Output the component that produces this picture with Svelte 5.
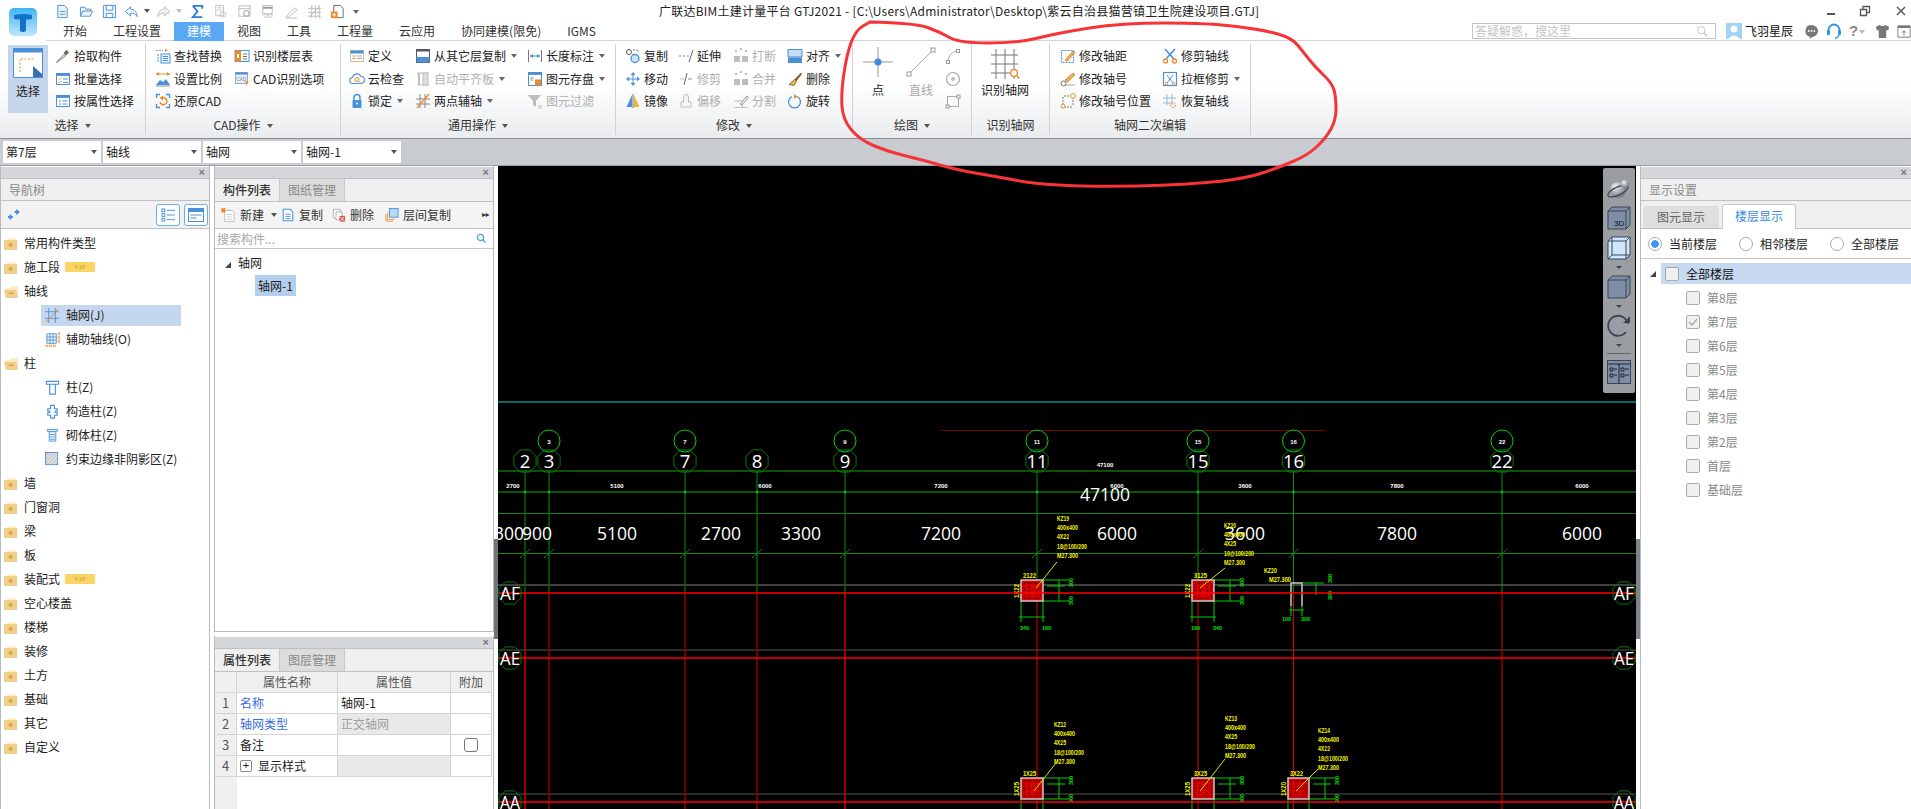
<script>
	const B = '#4a90d9';
	const O = '#ee8a2a';
	const G = '#bdbdbd';
	const D = '#8a8a8a';

	const icons = {
		file: `<path d="M3 1.5h7l3 3v10H3z" fill="#eef5fc" stroke="${B}"/><path d="M5 8h6M5 11h6" stroke="${B}"/>`,
		folder: `<path d="M1.5 13V3.5h5l1 2h5v2" fill="#eef5fc" stroke="${B}"/><path d="M1.5 13l2.5-5.5h10.5L12 13z" fill="#eef5fc" stroke="${B}"/>`,
		disk: `<path d="M1.5 1.5h13v13h-13z" fill="#eef5fc" stroke="${B}"/><path d="M4.5 1.5h7v5h-7zM4.5 10h7v4.5h-7z" fill="#fff" stroke="${B}"/>`,
		undo: `<path d="M7 2L1.5 7 7 12V9c3-.5 5.5.5 7 3.5 0-5-3-8-7-8z" fill="#eef5fc" stroke="${B}" transform="translate(0 1)"/>`,
		redo: `<path d="M9 2l5.500 5L9 12V9c-3-.5-5.500.5-7 3.500 0-5 3-8 7-8z" fill="#f4f4f4" stroke="${G}" transform="translate(0 1)"/>`,
		sigma: `<path d="M3 2h10v3M13 14H3l5-6-5-6" fill="none" stroke="#2f7fd0" stroke-width="2"/>`,
		q1: `<path d="M3 1.500h8v11H3zM5 4h4M5 6.500h4" fill="none" stroke="${G}"/><circle cx="10.500" cy="11" r="3" fill="none" stroke="${G}"/>`,
		q2: `<rect x="2" y="2" width="12" height="11" fill="none" stroke="${G}"/><path d="M2 5h12" stroke="${G}"/><circle cx="10" cy="10" r="3" fill="#fff" stroke="${D}"/>`,
		q3: `<rect x="3" y="1.500" width="10" height="9" fill="none" stroke="${G}"/><path d="M3 4h10" stroke="#999" stroke-width="2"/><circle cx="6" cy="12.500" r="2" fill="none" stroke="${G}"/><circle cx="11" cy="12.500" r="2" fill="none" stroke="${G}"/>`,
		q4: `<path d="M2 14l9-10 3 2-9 8zM2 15h12" fill="none" stroke="${G}"/>`,
		q5: `<path d="M5 1v14M9 1v14M13 1v14M1 5h14M1 9h14M1 13h14M2 14L14 2" stroke="${G}"/>`,
		q6: `<path d="M4 1.500h7l3 3v10H4z" fill="#fff" stroke="#666"/><path d="M1 8h7v7H1z" fill="${O}"/><path d="M4.500 9.500v4M2.500 11.500h4" stroke="#fff"/>`,
		pick: `<path d="M2.500 14l-1 .5.5-1L9 6.500l1.500 1.500z" fill="#ddd" stroke="#888"/><path d="M8.500 5l3-3 2.500 2.500-3 3z" fill="#666"/>`,
		batch: `<rect x="1.500" y="2.500" width="13" height="11" fill="#fff" stroke="${B}"/><path d="M1.500 3.700h13" stroke="${B}" stroke-width="2.400"/><path d="M3.500 7.500l1 1 2-2M3.500 11l1 1 2-2" stroke="${O}" fill="none"/><path d="M8 8h5M8 11.500h5" stroke="${B}"/>`,
		attr: `<rect x="1.500" y="2.500" width="13" height="11" fill="#fff" stroke="${B}"/><path d="M1.500 3.700h13" stroke="${B}" stroke-width="2.400"/><path d="M4 8h2M4 11h2M7.500 8h5M7.500 11h5" stroke="${B}"/>`,
		find: `<path d="M1 2.500h7" stroke="#999" stroke-dasharray="2 1"/><path d="M10 1v3l3-1.500z" fill="${O}"/><rect x="6" y="6" width="9" height="9" fill="#eef5fc" stroke="${B}"/><path d="M8 8.500h5M8 10.500h5M8 12.500h5M2 7h2M2 10h2M2 13h2" stroke="${B}"/>`,
		scale: `<path d="M1 3h14" stroke="${O}"/><path d="M1 3l3-2v4zM15 3l-3-2v4z" fill="${O}"/><path d="M1 14l4-5 3 2 3-3 4 6z" fill="${B}"/><path d="M1 15h14" stroke="#888"/>`,
		restore: `<path d="M1.500 5V1.500H5M11 1.500h3.500V5M14.500 11v3.500H11M5 14.500H1.500V11" fill="none" stroke="${B}" stroke-width="1.300"/><path d="M5 9a3.500 3.500 0 1 0 2-4" fill="none" stroke="${O}" stroke-width="1.500"/><path d="M8 2.500v5L4.500 5z" fill="${O}"/>`,
		floor: `<rect x="1" y="2.500" width="14" height="11" fill="#fff" stroke="${B}"/><path d="M1 2.500h6v11H1z" fill="${O}"/><path d="M3 6h2v4H3z" fill="#fff"/><path d="M9 6h4M9 8.500h4M9 11h4" stroke="#777"/>`,
		cadopt: `<rect x="1.500" y="1.500" width="12" height="11" fill="#e8eef7" stroke="#9ab"/><path d="M1.500 2.500h12" stroke="${B}" stroke-width="2"/><text x="2.500" y="9.500" font-size="4.500" fill="#7a8fb0" font-family="Liberation Sans">CAD</text><path d="M11 9l4 3-2 .5-.5 2.500z" fill="${O}"/>`,
		define: `<rect x="1.500" y="2.500" width="13" height="11" fill="#fdfdfd" stroke="#c9bfa5"/><path d="M1.500 2.500h13v3h-13z" fill="${B}"/><path d="M3.500 8h3M3.500 10.500h3" stroke="${O}"/><path d="M8 8h5M8 10.500h5" stroke="#aaa"/>`,
		cloud: `<path d="M4 12.500a3 3 0 0 1-.5-6 4.500 4.500 0 0 1 8.500-1 3.500 3.500 0 0 1 0 7z" fill="#fff" stroke="${B}" stroke-width="1.100"/><circle cx="8" cy="8.500" r="2" fill="none" stroke="${O}"/><path d="M9.500 10l1.500 1.500" stroke="${O}"/>`,
		lock: `<path d="M5 7V4.500a3 3 0 0 1 6 0V7" fill="none" stroke="${B}" stroke-width="1.500"/><rect x="3.500" y="7" width="9" height="8" rx="1" fill="${B}"/><circle cx="8" cy="10.500" r="1" fill="#fff"/>`,
		copyfloor: `<rect x="1.500" y="1.500" width="13" height="13" fill="#fff" stroke="#556"/><path d="M1.500 2.500h13" stroke="#556" stroke-width="2"/><path d="M1.500 9h13v5.500h-13z" fill="${B}"/>`,
		autofit: `<path d="M2 2h12M2 14h12" stroke="${G}"/><rect x="3" y="2" width="2" height="12" fill="${G}"/><rect x="8" y="2" width="5" height="12" fill="#ddd" stroke="${G}"/>`,
		twopt: `<path d="M5 1v14M10 1v14M1 6h14M1 11h14" stroke="#888"/><path d="M2 15L14 1" stroke="${O}" stroke-width="1.300"/>`,
		length: `<path d="M1.500 2v12M14.500 2v12" stroke="#777"/><path d="M3 8h10" stroke="${B}"/><path d="M3 8l3-2v4zM13 8l-3-2v4z" fill="${B}"/>`,
		store: `<rect x="1.500" y="1.500" width="13" height="13" fill="#fff" stroke="${B}"/><path d="M1.500 2.700h13" stroke="${B}" stroke-width="2.400"/><path d="M3.500 7h3M3.500 9h2" stroke="#778"/><rect x="8" y="8.500" width="6" height="6" fill="${O}"/>`,
		filter: `<path d="M1 2h13L9 8v6l-3-2V8z" fill="${G}"/><path d="M11 13h4M11 15h4" stroke="${G}"/>`,
		copy: `<circle cx="4" cy="4" r="2.500" fill="none" stroke="#555"/><path d="M8 2h4l2 2" fill="none" stroke="#777" stroke-dasharray="2 1"/><circle cx="10" cy="10.500" r="4" fill="#cfe4f8" stroke="${B}" stroke-width="1.300"/>`,
		move: `<path d="M8 1l2.500 3h-5zM8 15l2.500-3h-5zM1 8l3-2.500v5zM15 8l-3-2.500v5z" fill="${B}"/><path d="M8 4v8M4 8h8" stroke="${B}"/>`,
		mirror: `<path d="M7 2v12H1.500z" fill="${B}"/><path d="M9 2v12h5.500z" fill="#f3b431"/><path d="M8 1v14" stroke="#777"/>`,
		extend: `<path d="M1 8h7" stroke="#777" stroke-dasharray="2 1.500"/><path d="M9 8h2" stroke="${B}"/><path d="M11 14l4-12" stroke="#667"/>`,
		trim: `<path d="M2 8h4M10 8h4" stroke="${G}"/><path d="M6 14l3-12" stroke="#666"/><path d="M10 8h4" stroke="#999" stroke-dasharray="2 1"/>`,
		offset: `<path d="M3 14V9h2.500V4a2 2 0 0 1 5 0v5H13v5z" fill="#f7f7f7" stroke="${G}"/>`,
		breakl: `<path d="M2 3h2M12 3h2M7 1h2" stroke="${G}" stroke-width="2"/><rect x="1" y="8" width="6" height="6" fill="${G}"/><rect x="9" y="8" width="6" height="6" fill="${G}"/>`,
		split: `<path d="M1.500 14.500h13M1.500 8h8v6.500" fill="none" stroke="${G}"/><path d="M7 11l7-8 1.500 1.500L9 12z" fill="#eee" stroke="#999"/>`,
		align: `<path d="M1 1.500h14V9H1z" fill="#c8dcf4" stroke="${B}"/><path d="M1 9.500h14v5.500H1z" fill="${B}"/>`,
		erase: `<path d="M14 1.500L7.500 8.500l2 1.500L15 3z" fill="#8a5a2a"/><path d="M7.500 8.500L2 13.500l5 1 2.500-4.500z" fill="#f3b431" stroke="#333" stroke-width=".6"/>`,
		rotate: `<path d="M5 3.500a6 6 0 1 0 5 0" fill="none" stroke="${B}" stroke-width="1.300"/><path d="M7 1l3.500 2.500L7 6z" fill="${O}"/>`,
		arc: `<path d="M3 14C3 8 7 3 13 3" fill="none" stroke="#aaa"/><rect x="1.500" y="12.500" width="3" height="3" fill="#fff" stroke="#999"/><rect x="11.500" y="1.500" width="3" height="3" fill="#fff" stroke="#999"/>`,
		circle: `<circle cx="8" cy="8" r="6.500" fill="#fff" stroke="#aaa" stroke-width="1.200"/><circle cx="8" cy="8" r="1.300" fill="none" stroke="#999"/>`,
		rect: `<rect x="2.500" y="3.500" width="11" height="10" fill="none" stroke="#aaa"/><rect x="1" y="12" width="3" height="3" fill="#fff" stroke="#999"/><rect x="12" y="2" width="3" height="3" fill="#fff" stroke="#999"/>`,
		editdist: `<rect x="1.500" y="2.500" width="12" height="12" fill="none" stroke="${B}" stroke-dasharray="2 1"/><path d="M5 12l8-9 2 1.500-8 9z" fill="#f3b431" stroke="#a66"  stroke-width=".6"/>`,
		editnum: `<circle cx="3.500" cy="12.500" r="2.500" fill="#fff" stroke="#777"/><path d="M5 9l8-7 2 2-8 7.500z" fill="#f3b431" stroke="#a66" stroke-width=".6"/><path d="M6 14h9" stroke="#aaa"/>`,
		editpos: `<path d="M3 4v9M13 4v9M4 3h8M4 14h8" stroke="#777" stroke-dasharray="2 1"/><circle cx="3" cy="13" r="2" fill="#fff" stroke="${O}"/><circle cx="13" cy="3" r="2.400" fill="#fff" stroke="${O}"/>`,
		scissor: `<path d="M3 1l9 10M13 1L4 11" stroke="${B}" stroke-width="1.600"/><circle cx="3.500" cy="13" r="2" fill="none" stroke="${O}" stroke-width="1.300"/><circle cx="12.500" cy="13" r="2" fill="none" stroke="${O}" stroke-width="1.300"/>`,
		boxtrim: `<rect x="1.500" y="1.500" width="13" height="13" fill="#fff" stroke="${B}" stroke-width="1.200"/><path d="M5 4l6 8M11 4l-6 8" stroke="${B}"/><circle cx="4.500" cy="12.500" r="1.300" fill="none" stroke="${O}"/><circle cx="11.500" cy="12.500" r="1.300" fill="none" stroke="${O}"/>`,
		recover: `<path d="M5 1v11M10 1v11M1 5h13M1 10h8" stroke="#9bb7d8"/><circle cx="11" cy="12" r="2.500" fill="none" stroke="${O}" stroke-dasharray="2 1"/>`,
		fclosed: `<path d="M0 4h5V2h7v2h2v11H0z" fill="#f0cf8e"/><path d="M5 2h7v2H5z" fill="#fff4d8"/><path d="M7 7v5M4.500 9.500h5" stroke="#d29d3f" stroke-width="1.500"/>`,
		fopen: `<path d="M1 4h6V2h8v11H3z" fill="#fbecc8"/><path d="M0 6h13l2 9H2z" fill="#f0cf8e"/><path d="M5 10h5" stroke="#d29d3f" stroke-width="1.500"/>`,
		ngrid: `<path d="M4 0v16M11 0v16M0 4h15M0 11h15" stroke="${B}"/><path d="M1 15L14 1" stroke="${O}"/>`,
		naux: `<path d="M2 2h10v10H2zM5.300 2v10M8.600 2v10M2 5.300h10M2 8.600h10" fill="none" stroke="${B}"/><path d="M14 1h2v2h-2zM14 5h2v2h-2zM14 9h2v2h-2zM1 14h2v2H1zM5 14h2v2H5zM9 14h2v2H9z" fill="none" stroke="${O}" stroke-width=".8"/>`,
		ncol: `<path d="M1.500 1.500h13v3h-13zM5 4.500h6V15H5z" fill="#fff" stroke="${B}" stroke-width="1.200"/>`,
		ncross: `<path d="M6 1.500h4V5h3v2.500h-2v1.500h2v3h-3v3H6v-3H3V9h2V7.500H3V5h3z" fill="#fff" stroke="${B}" stroke-width="1.200"/>`,
		nmason: `<path d="M2.500 1.500h11v2h-11zM4.500 4h7v10h-7z" fill="#fff" stroke="${B}"/><path d="M5 7h6M5 9.500h6M5 12h6" stroke="${B}"/>`,
		nhatch: `<rect x=".5" y=".5" width="13" height="13" fill="#ccc" stroke="${B}"/><path d="M1 5l4-4M1 9l8-8M1 13L13 1M5 13l8-8M9 13l4-4" stroke="#eee"/>`,
		sparkle: `<path d="M3 8v6M0 11h6M11 2v6M8 5h6" stroke="${B}" stroke-width="2.400"/>`,
		list: `<rect x="1" y="2" width="3" height="3" fill="none" stroke="${B}"/><rect x="1" y="7" width="3" height="3" fill="none" stroke="${B}"/><rect x="1" y="12" width="3" height="3" fill="none" stroke="${B}"/><path d="M6 3.500h9M6 8.500h9M6 13.500h9" stroke="${B}"/>`,
		panel: `<rect x=".5" y="1.500" width="15" height="13" fill="#fff" stroke="${B}"/><path d="M.5 1.500h15v3.500H.5z" fill="${B}"/><path d="M2.500 8h11M2.500 11h6" stroke="${B}"/>`,
		tnew: `<path d="M4 2.500h8l2 2v10H4z" fill="#fff" stroke="#bbb"/><path d="M6 7h6M6 9.500h6M6 12h6" stroke="#ccc"/><path d="M0 0h5v5H0z" fill="${O}" stroke="#fff" stroke-dasharray="1 1"/>`,
		tcopy: `<path d="M2.500 1.500h8l3 3v10h-11z" fill="#fff" stroke="${B}" stroke-width="1.200"/><path d="M5 7h6M5 9.500h6M5 12h6" stroke="${B}"/>`,
		tdel: `<path d="M1.500 1.500h8v10h-8z" fill="#fff" stroke="#aaa"/><path d="M4.500 4.500h7v9h-7z" fill="#fff" stroke="#aaa"/><rect x="8.500" y="9" width="6.500" height="6.500" fill="#e0504a"/><path d="M9.500 10l4.500 4.500M14 10l-4.500 4.500" stroke="#fff"/>`,
		tlayer: `<rect x="5" y="0.500" width="10" height="10" fill="#b8d8f8" stroke="${B}"/><path d="M3 5v8h8M1 7v8h8" fill="none" stroke="${O}"/>`,
		search: `<circle cx="6.500" cy="6.500" r="4.500" fill="#fff" stroke="#4aa3d8" stroke-width="1.800"/><path d="M10 10l4 4" stroke="#4aa3d8" stroke-width="2"/>`,
		searchg: `<circle cx="6.500" cy="6.500" r="4.500" fill="none" stroke="#bbb"/><path d="M10 10l4 4" stroke="#bbb" stroke-width="1.500"/>`
	};

	function svg(name, size = 16) {
		return `<svg width="${size}" height="${size}" viewBox="0 0 16 16">${icons[name]}</svg>`;
	}

	const quick = [
		['file', ''], ['folder', ''], ['disk', ''], ['undo', 'u'], ['', 'c'], ['redo', 'u'], ['', 'cg'],
		['sigma', 's'], ['q1', ''], ['q2', ''], ['q3', ''], ['q4', ''], ['q5', ''], ['q6', ''], ['', 'm']
	];

	const tabs = ['开始', '工程设置', '建模', '视图', '工具', '工程量', '云应用', '协同建模(限免)', 'IGMS'];

	const groups = [
		{
			name: '选择', cls: 'g1', caret: true,
			parts: [
				{ big: 'select', text: '选择', cls: 'sel' },
				{ w: 'w0', items: [
					{ icon: 'pick', text: '拾取构件' },
					{ icon: 'batch', text: '批量选择' },
					{ icon: 'attr', text: '按属性选择' }
				] }
			]
		},
		{
			name: 'CAD操作', cls: 'g2', caret: true,
			parts: [
				{ w: 'w79', items: [
					{ icon: 'find', text: '查找替换' },
					{ icon: 'scale', text: '设置比例' },
					{ icon: 'restore', text: '还原CAD' }
				] },
				{ w: 'w0', items: [
					{ icon: 'floor', text: '识别楼层表' },
					{ icon: 'cadopt', text: 'CAD识别选项' }
				] }
			]
		},
		{
			name: '通用操作', cls: 'g3', caret: true,
			parts: [
				{ w: 'w66', items: [
					{ icon: 'define', text: '定义' },
					{ icon: 'cloud', text: '云检查' },
					{ icon: 'lock', text: '锁定', caret: true }
				] },
				{ w: 'w112', items: [
					{ icon: 'copyfloor', text: '从其它层复制', caret: true },
					{ icon: 'autofit', text: '自动平齐板', caret: true, off: true },
					{ icon: 'twopt', text: '两点辅轴', caret: true }
				] },
				{ w: 'w0', items: [
					{ icon: 'length', text: '长度标注', caret: true },
					{ icon: 'store', text: '图元存盘', caret: true },
					{ icon: 'filter', text: '图元过滤', off: true }
				] }
			]
		},
		{
			name: '修改', cls: 'g4', caret: true,
			parts: [
				{ w: 'w53', items: [
					{ icon: 'copy', text: '复制' },
					{ icon: 'move', text: '移动' },
					{ icon: 'mirror', text: '镜像' }
				] },
				{ w: 'w55', items: [
					{ icon: 'extend', text: '延伸' },
					{ icon: 'trim', text: '修剪', off: true },
					{ icon: 'offset', text: '偏移', off: true }
				] },
				{ w: 'w54', items: [
					{ icon: 'breakl', text: '打断', off: true },
					{ icon: 'breakl', text: '合并', off: true },
					{ icon: 'split', text: '分割', off: true }
				] },
				{ w: 'w0', items: [
					{ icon: 'align', text: '对齐', caret: true },
					{ icon: 'erase', text: '删除' },
					{ icon: 'rotate', text: '旋转' }
				] }
			]
		},
		{
			name: '绘图', cls: 'g5', caret: true,
			parts: [
				{ big: 'point', text: '点', cls: 'b50' },
				{ big: 'line', text: '直线', cls: 'b34 off' },
				{ w: 'w0', items: [
					{ icon: 'arc', text: '' },
					{ icon: 'circle', text: '' },
					{ icon: 'rect', text: '' }
				] }
			]
		},
		{
			name: '识别轴网', cls: 'g6',
			parts: [{ big: 'grid', text: '识别轴网', cls: 'b50' }]
		},
		{
			name: '轴网二次编辑', cls: 'g7',
			parts: [
				{ w: 'w102', items: [
					{ icon: 'editdist', text: '修改轴距' },
					{ icon: 'editnum', text: '修改轴号' },
					{ icon: 'editpos', text: '修改轴号位置' }
				] },
				{ w: 'w0', items: [
					{ icon: 'scissor', text: '修剪轴线' },
					{ icon: 'boxtrim', text: '拉框修剪', caret: true },
					{ icon: 'recover', text: '恢复轴线' }
				] }
			]
		}
	];

	const selectors = ['第7层', '轴线', '轴网', '轴网-1'];

	const tree = [
		{ t: '常用构件类型', icon: 'fclosed' },
		{ t: '施工段', icon: 'fclosed', vip: true },
		{ t: '轴线', icon: 'fopen' },
		{ t: '轴网(J)', icon: 'ngrid', child: true, sel: true },
		{ t: '辅助轴线(O)', icon: 'naux', child: true },
		{ t: '柱', icon: 'fopen' },
		{ t: '柱(Z)', icon: 'ncol', child: true },
		{ t: '构造柱(Z)', icon: 'ncross', child: true },
		{ t: '砌体柱(Z)', icon: 'nmason', child: true },
		{ t: '约束边缘非阴影区(Z)', icon: 'nhatch', child: true },
		{ t: '墙', icon: 'fclosed' },
		{ t: '门窗洞', icon: 'fclosed' },
		{ t: '梁', icon: 'fclosed' },
		{ t: '板', icon: 'fclosed' },
		{ t: '装配式', icon: 'fclosed', vip: true },
		{ t: '空心楼盖', icon: 'fclosed' },
		{ t: '楼梯', icon: 'fclosed' },
		{ t: '装修', icon: 'fclosed' },
		{ t: '土方', icon: 'fclosed' },
		{ t: '基础', icon: 'fclosed' },
		{ t: '其它', icon: 'fclosed' },
		{ t: '自定义', icon: 'fclosed' }
	];

	const floors = ['第8层', '第7层', '第6层', '第5层', '第4层', '第3层', '第2层', '首层', '基础层'];

	// drawing data, in page coordinates
	const axes = [
		{ n: '2', x: 525, hex: true, red: '#d00000' },
		{ n: '3', x: 549, top: true, red: '#8f0000' },
		{ n: '7', x: 685, top: true, red: '#8f0000' },
		{ n: '8', x: 757, red: '#8f0000' },
		{ n: '9', x: 845, top: true, red: '#d00000' },
		{ n: '11', x: 1037, top: true, red: '#e00000', bright: true },
		{ n: '15', x: 1198, top: true, red: '#e00000', bright: true },
		{ n: '16', x: 1293.5, top: true, red: '#e00000', bright: true },
		{ n: '22', x: 1502, top: true, red: '#e00000', bright: true }
	];
	const dims = [
		[513, '2700'], [617, '5100'], [765, '6000'], [941, '7200'],
		[1117, '6000'], [1245, '3600'], [1397, '7800'], [1582, '6000']
	];
	const spans = [
		[509, '300'], [537, '900'], [617, '5100'], [721, '2700'], [801, '3300'], [941, '7200'],
		[1117, '6000'], [1245, '3600'], [1397, '7800'], [1582, '6000']
	];
	const rows = [
		{ n: 'AF', gray: 584, red: 592, c: '#808080' },
		{ n: 'AE', gray: 649, red: 657, c: '#555' },
		{ n: 'AA', gray: 793, red: 801, c: '#555' }
	];
	const columns = [
		{ x: 1021, y: 579, w: 22, h: 21, tx: 1057, ty: 517, lead: [1036, 587, 1057, 561], top: '2122', side: '1X22', low: ['340', '160'],
			lines: ['KZ19', '400x400', '4X22', '18@100/200', 'M27.300'] },
		{ x: 1192, y: 579, w: 22, h: 21, tx: 1224, ty: 524, lead: [1200, 587, 1225, 567], top: '3125', side: '1X22', low: ['160', '340'],
			lines: ['KZ20', '400x400', '4X25', '10@100/200', 'M27.300'] },
		{ x: 1021, y: 777, w: 22, h: 21, tx: 1054, ty: 723, lead: [1034, 790, 1056, 762], top: '1X25', side: '1X25',
			lines: ['KZ12', '400x400', '4X25', '18@100/200', 'M27.300'] },
		{ x: 1192, y: 777, w: 22, h: 21, tx: 1225, ty: 717, lead: [1200, 790, 1225, 758], top: '3X25', side: '1X25',
			lines: ['KZ13', '400x400', '4X25', '18@100/200', 'M27.300'] },
		{ x: 1288, y: 777, w: 21, h: 21, tx: 1318, ty: 729, lead: [1296, 790, 1318, 768], top: '3X22', side: '1X20',
			lines: ['KZ14', '400x400', '4X22', '18@100/200', 'M27.300'] }
	];

	function ngon(cx, cy, r) {
		let pts = [];
		for (let i = 0; i < 8; i++) {
			const a = Math.PI / 8 + (i * Math.PI) / 4;
			pts.push((cx + r * Math.cos(a)).toFixed(1) + ',' + (cy + r * Math.sin(a)).toFixed(1));
		}
		return pts.join(' ');
	}

	// the hand drawn loop round the ribbon
	const loop = [
		[870, 22], [915, 23], [940, 32], [959, 43], [1018, 43], [1058, 33], [1121, 23], [1209, 23], [1264, 30],
		[1292, 38], [1304, 53], [1316, 68], [1332, 83], [1336, 97], [1336, 120], [1326, 138], [1308, 155],
		[1280, 167], [1251, 177], [1209, 183], [1125, 187], [1041, 185], [999, 177], [957, 170], [923, 160],
		[889, 152], [860, 140], [843, 120], [841, 93], [847, 53], [856, 30], [870, 22]
	];
	let loopPath = `M${loop[0][0]} ${loop[0][1]}`;
	for (let i = 1; i < loop.length - 1; i++) {
		const mx = (loop[i][0] + loop[i + 1][0]) / 2;
		const my = (loop[i][1] + loop[i + 1][1]) / 2;
		loopPath += ` Q${loop[i][0]} ${loop[i][1]} ${mx} ${my}`;
	}
	loopPath += ` L${loop[0][0]} ${loop[0][1]}`;
</script>

{#snippet tool(t)}
	<div class="tool" class:off={t.off}>
		<span class="ic">{@html svg(t.icon)}</span>
		{#if t.text}<span>{t.text}</span>{/if}
		{#if t.caret}<i class="caret"></i>{/if}
	</div>
{/snippet}

{#snippet bigIcon(name)}
	{#if name === 'select'}
		<svg width="30" height="30" viewBox="0 0 30 30">
			<rect x=".5" y=".5" width="29" height="29" fill="#fff" stroke="#4a90d9"/>
			<rect x=".5" y=".5" width="29" height="4" fill="#4a90d9"/>
			<path d="M7 24V11h15" fill="none" stroke="#ee8a2a" stroke-dasharray="2 1.500"/>
			<path d="M20 18l9 8v3h-9z" fill="#3f6fb0"/>
		</svg>
	{:else if name === 'point'}
		<svg width="30" height="30" viewBox="0 0 30 30">
			<path d="M15 0v30M0 15h30" stroke="#999"/>
			<circle cx="15" cy="15" r="3.500" fill="#3f86dc"/>
		</svg>
	{:else if name === 'line'}
		<svg width="30" height="30" viewBox="0 0 30 30">
			<path d="M3 27L27 3" stroke="#aaa"/>
			<rect x="1" y="25" width="4" height="4" fill="#fff" stroke="#999"/>
			<rect x="25" y="1" width="4" height="4" fill="#fff" stroke="#999"/>
		</svg>
	{:else}
		<svg width="30" height="34" viewBox="0 0 30 34">
			<path d="M6 2v30M15 2v30M24 2v30M1 8h27M1 17h27M1 26h27" stroke="#777"/>
			<circle cx="24" cy="26" r="3.500" fill="#fff" stroke="#ee8a2a" stroke-width="1.500"/>
			<path d="M27 29l2.500 2.500" stroke="#ee8a2a" stroke-width="1.500"/>
		</svg>
	{/if}
{/snippet}

<div class="app">
	<header class="top">
		<div class="logo-col">
			<div class="logo">
				<svg width="28" height="28" viewBox="0 0 28 28">
					<defs>
						<linearGradient id="lg" x1="0" y1="0" x2="0" y2="1">
							<stop offset="0" stop-color="#3fb4f4"/>
							<stop offset="1" stop-color="#bfe6fb"/>
						</linearGradient>
					</defs>
					<rect width="28" height="28" rx="5" fill="url(#lg)"/>
					<path d="M5 7q9-2 18 0v4l-6 .5V23q-3 2-6 0V11.500L5 11z" fill="#1173c9"/>
				</svg>
			</div>
		</div>
		<div class="top-main">
			<div class="title-row">
				<div class="quick">
					{#each quick as q}
						{#if q[1] === 'c' || q[1] === 'cg' || q[1] === 'm'}
							<span class="q-caret {q[1]}"></span>
						{:else}
							<span class="q {q[1]}">{@html svg(q[0], 15)}</span>
						{/if}
					{/each}
				</div>
				<div class="title">广联达BIM土建计量平台 GTJ2021 - [C:\Users\Administrator\Desktop\紫云自治县猫营镇卫生院建设项目.GTJ]</div>
				<div class="win">
					<span class="w-min"></span>
					<svg width="12" height="12" viewBox="0 0 12 12"><path d="M1.500 4.500h6v6h-6zM4 4.500V1.500h6.500v6h-3" fill="none" stroke="#555" stroke-width="1.300"/></svg>
					<svg width="12" height="12" viewBox="0 0 12 12"><path d="M2 2l8 8M10 2l-8 8" stroke="#555" stroke-width="1.400"/></svg>
				</div>
			</div>
			<div class="tab-row">
				{#each tabs as t}
					<div class="tab" class:active={t === '建模'}>{t}</div>
				{/each}
				<div class="tab-right">
					<div class="ask">
						<span>答疑解惑，搜这里</span>
						{@html svg('searchg', 13)}
					</div>
					<svg class="avatar" width="16" height="16" viewBox="0 0 16 16">
						<rect width="16" height="16" fill="#9fd3f7"/>
						<circle cx="8" cy="6" r="3.500" fill="#fff"/>
						<path d="M2 16q6-7 12 0z" fill="#fff"/>
					</svg>
					<span class="user">飞羽星辰</span>
					<div class="top-ic">
						<svg width="15" height="15" viewBox="0 0 16 16"><path d="M8 1a7 6.500 0 0 1 0 13l-1 2-1-2.300A6.500 6.500 0 0 1 8 1z" fill="#777"/><circle cx="5" cy="7.500" r="1" fill="#fff"/><circle cx="8" cy="7.500" r="1" fill="#fff"/><circle cx="11" cy="7.500" r="1" fill="#fff"/></svg>
						<svg width="16" height="16" viewBox="0 0 16 16"><path d="M2.500 9V7a5.500 5.500 0 0 1 11 0v2" fill="none" stroke="#2f95e8" stroke-width="1.800"/><rect x="1" y="7" width="3" height="5" rx="1" fill="#2f95e8"/><rect x="12" y="7" width="3" height="5" rx="1" fill="#2f95e8"/><path d="M13 12q-1 3-4 3" fill="none" stroke="#2f95e8" stroke-width="1.300"/></svg>
						<span class="help">?<i class="caret"></i></span>
						<svg width="15" height="15" viewBox="0 0 16 16"><path d="M5 1L1 3l1 4 2-.500V15h8V6.500l2 .500 1-4-4-2q-3 2.500-6 0z" fill="#777"/></svg>
						<svg width="14" height="15" viewBox="0 0 16 16"><path d="M1 1.500h14v13H1z" fill="#fff" stroke="#777"/><path d="M1 1.500h14v2.500H1z" fill="#777"/><path d="M8 13V7.500M5.500 9.500L8 7l2.500 2.500" fill="none" stroke="#777"/></svg>
					</div>
				</div>
			</div>
		</div>
	</header>

	<section class="ribbon">
		{#each groups as g}
			<div class="group {g.cls}">
				<div class="group-body">
					{#each g.parts as p}
						{#if p.big}
							<div class="big {p.cls}">
								<div class="big-ic">{@render bigIcon(p.big)}</div>
								<span>{p.text}</span>
							</div>
						{:else}
							<div class="col {p.w}">
								{#each p.items as it}
									{@render tool(it)}
								{/each}
							</div>
						{/if}
					{/each}
				</div>
				<div class="group-name">{g.name}{#if g.caret}<i class="caret"></i>{/if}</div>
			</div>
		{/each}
	</section>

	<section class="selbar">
		{#each selectors as s}
			<div class="select">{s}<i class="caret"></i></div>
		{/each}
	</section>

	<main class="main">
		<aside class="panel nav">
			<div class="strip">×</div>
			<div class="ptitle">导航树</div>
			<div class="nav-tools">
				<span class="sparkle">{@html svg('sparkle', 13)}</span>
				<span class="toggle">{@html svg('list', 15)}</span>
				<span class="toggle">{@html svg('panel', 16)}</span>
			</div>
			<div class="tree">
				{#each tree as n}
					<div class="node" class:child={n.child}>
						<div class="node-in" class:sel={n.sel}>
							<span class="node-ic">{@html svg(n.icon, 15)}</span>
							<span>{n.t}</span>
							{#if n.vip}<span class="vip">VIP</span>{/if}
						</div>
					</div>
				{/each}
			</div>
		</aside>

		<div class="mid">
			<div class="panel comp">
				<div class="strip">×</div>
				<div class="tabs2">
					<div class="t2 on">构件列表</div>
					<div class="t2">图纸管理</div>
				</div>
				<div class="comp-tools">
					<span class="ti">{@html svg('tnew', 15)}新建<i class="caret"></i></span>
					<span class="ti t-copy">{@html svg('tcopy', 14)}复制</span>
					<span class="ti t-del">{@html svg('tdel', 14)}删除</span>
					<span class="ti t-lay">{@html svg('tlayer', 14)}层间复制</span>
					<span class="more">▸▸</span>
				</div>
				<div class="comp-search">
					<span>搜索构件...</span>
					{@html svg('search', 11)}
				</div>
				<div class="comp-tree">
					<div class="ct-root"><i class="tri"></i>轴网</div>
					<div class="ct-leaf"><span>轴网-1</span></div>
				</div>
			</div>
			<div class="panel props">
				<div class="strip">×</div>
				<div class="tabs2">
					<div class="t2 on">属性列表</div>
					<div class="t2">图层管理</div>
				</div>
				<div class="ptable">
					<div class="cell head"></div>
					<div class="cell head ctr">属性名称</div>
					<div class="cell head ctr">属性值</div>
					<div class="cell head ctr">附加</div>

					<div class="cell head ctr num">1</div>
					<div class="cell link">名称</div>
					<div class="cell">轴网-1</div>
					<div class="cell"></div>

					<div class="cell head ctr num">2</div>
					<div class="cell link">轴网类型</div>
					<div class="cell fixed">正交轴网</div>
					<div class="cell"></div>

					<div class="cell head ctr num">3</div>
					<div class="cell">备注</div>
					<div class="cell"></div>
					<div class="cell ctr"><span class="chk"></span></div>

					<div class="cell head ctr num">4</div>
					<div class="cell"><span class="plus">+</span>显示样式</div>
					<div class="cell fixed"></div>
					<div class="cell"></div>
				</div>
				<div class="gutter"></div>
			</div>
		</div>

		<div class="split"><span></span></div>

		<div class="canvas">
			<svg class="draw" viewBox="498 165 1138 644" width="1138" height="644">
				<path d="M498 401h1138" stroke="#0b8c8c" stroke-width="1.500"/>
				<path d="M941 429.500h384" stroke="#7a0000"/>
				<path d="M498 470h1138M498 491h1138" stroke="#12a612" stroke-width="1"/>
				<path d="M498 512.500h1138M498 552.500h1138" stroke="#0c860c"/>

				{#each rows as r}
					<path d="M498 {r.gray}h1138" stroke={r.c}/>
				{/each}

				{#each axes as a}
					<path d="M{a.x} 470V592" stroke={a.bright ? '#0a8f0a' : '#0a5f0a'} stroke-width={a.bright ? 1 : 1.500}/>
					<path d="M{a.x} 592V809" stroke={a.red} stroke-width={a.bright ? 1 : 1.500}/>
					<path d="M{a.x - 5} 557l10-9" stroke="#0c860c"/>
					<circle cx={a.x} cy="491" r="1.300" fill="#12c012"/>
					<polygon points={ngon(a.x, 460, 12)} fill="none" stroke="#0a7a0a"/>
					<text class="big-n" x={a.x} y="467">{a.n}</text>
					{#if a.top}
						<circle cx={a.x} cy="440" r="11" fill="none" stroke="#00d000"/>
						<text class="tiny" x={a.x} y="443">{a.n}</text>
					{/if}
				{/each}

				{#each dims as d}
					<text class="tiny" x={d[0]} y="487">{d[1]}</text>
				{/each}
				<text class="tiny" x="1105" y="466">47100</text>
				<text class="span" x="1105" y="500">47100</text>
				{#each spans as s}
					<text class="span" x={s[0]} y="539">{s[1]}</text>
				{/each}

				{#each columns as c}
					<g stroke="#00d000" fill="none">
						<path d="M{c.x + c.w} {c.y}h26M{c.x + c.w} {c.y + c.h}h26M{c.x + c.w + 16} {c.y}v{c.h}M{c.x + c.w + 4} {c.y + 6}h18"/>
						<path d="M{c.x} {c.y + c.h}v21M{c.x + c.w} {c.y + c.h}v21M{c.x - 2} {c.y + c.h + 16}h{c.w + 4}"/>
					</g>
					<rect x={c.x} y={c.y} width={c.w} height={c.h} fill="#d80000" stroke="#c9c9c9" stroke-width="1.500"/>
					<rect x={c.x + 3} y={c.y + 3} width={c.w - 6} height={c.h - 6} fill="none" stroke="#300" stroke-dasharray="1.500 1.500"/>
					<path d="M{c.x + 8} {c.y + 2}v{c.h - 4}M{c.x + 15} {c.y + 2}v{c.h - 4}M{c.x + 3} {c.y + 10}h{c.w - 6}" stroke="#500" stroke-dasharray="2 2"/>
					<path d="M{c.lead[0]} {c.lead[1]}L{c.lead[2]} {c.lead[3]}" stroke="#e0e000"/>
					<text class="yel" x={c.x + 2} y={c.y - 2} textLength="13" lengthAdjust="spacingAndGlyphs">{c.top}</text>
					<text class="yel" transform="translate({c.x - 2} {c.y + 18}) rotate(-90)" textLength="14" lengthAdjust="spacingAndGlyphs">{c.side}</text>
					{#each c.lines as l, i}
						<text class="yel" x={c.tx} y={c.ty + 3 + i * 9.200} textLength={l.length * 3} lengthAdjust="spacingAndGlyphs">{l}</text>
					{/each}
					<text class="gre" transform="translate({c.x + c.w + 30} {c.y + 7}) rotate(-90)">300</text>
					<text class="gre" transform="translate({c.x + c.w + 30} {c.y + c.h + 4}) rotate(-90)">300</text>
					{#if c.low}
						<text class="gre" x={c.x - 1} y={c.y + c.h + 29}>{c.low[0]}</text>
						<text class="gre" x={c.x + 21} y={c.y + c.h + 29}>{c.low[1]}</text>
					{/if}
				{/each}

				<!-- the one without a red section -->
				<g fill="none">
					<path d="M1291 605v-23h11v23" stroke="#c9c9c9" stroke-width="1.500"/>
					<path d="M1302 582h22M1316 582v12M1291 605v10M1302 605v10M1289 609h15" stroke="#00d000"/>
				</g>
				<text class="yel" x="1264" y="572" textLength="13" lengthAdjust="spacingAndGlyphs">KZ20</text>
				<text class="yel" x="1269" y="581" textLength="22" lengthAdjust="spacingAndGlyphs">M27.300</text>
				<text class="gre" transform="translate(1332 582) rotate(-90)">300</text>
				<text class="gre" transform="translate(1332 599) rotate(-90)">300</text>
				<text class="gre" x="1282" y="620">100</text>
				<text class="gre" x="1301" y="620">300</text>

				{#each rows as r}
					<path d="M498 {r.red}h1138" stroke="#ff0000" stroke-width="1.300"/>
					<polygon points={ngon(510, r.red, 12)} fill="none" stroke="#0a7a0a"/>
					<polygon points={ngon(1624, r.red, 12)} fill="none" stroke="#0a7a0a"/>
					<text class="big-n" x="510" y={r.red + 7} textLength="20" lengthAdjust="spacingAndGlyphs">{r.n}</text>
					<text class="big-n" x="1624" y={r.red + 7} textLength="20" lengthAdjust="spacingAndGlyphs">{r.n}</text>
				{/each}
			</svg>

			<div class="viewbar">
				<svg width="24" height="22" viewBox="0 0 24 22">
					<defs>
						<radialGradient id="ball" cx=".35" cy=".3" r=".8">
							<stop offset="0" stop-color="#f2f3f5"/>
							<stop offset="1" stop-color="#5f6874"/>
						</radialGradient>
					</defs>
					<circle cx="11" cy="12" r="8" fill="url(#ball)"/>
					<ellipse cx="11" cy="13" rx="11" ry="4" fill="none" stroke="#3a4656" stroke-width="1.200" transform="rotate(-25 11 13)"/>
					<circle cx="18" cy="6" r="4" fill="url(#ball)"/>
				</svg>
				<svg width="24" height="24" viewBox="0 0 24 24">
					<path d="M1 5l4-4h18v18l-4 4H1z" fill="#7d8ea6" stroke="#3a4656"/>
					<path d="M1 5h18v18M19 5l4-4" fill="none" stroke="#3a4656"/>
					<text x="7" y="20" font-size="8" font-family="Liberation Sans" fill="#111">3D</text>
				</svg>
				<svg width="24" height="24" viewBox="0 0 24 24">
					<path d="M1 5l4-4h18v18l-4 4H1z" fill="#cfe6ff" stroke="#3a4656"/>
					<path d="M1 5h18v18M19 5l4-4M5 1v18h18M5 19l-4 4" fill="none" stroke="#3a4656"/>
				</svg>
				<i class="vb-caret"></i>
				<svg width="24" height="24" viewBox="0 0 24 24">
					<path d="M1 5l4-4h18v18l-4 4H1z" fill="#7d8ea6" stroke="#3a4656"/>
					<path d="M1 5h18v18M19 5l4-4" fill="none" stroke="#3a4656"/>
				</svg>
				<i class="vb-caret"></i>
				<svg width="24" height="24" viewBox="0 0 24 24">
					<path d="M21 10a10 10 0 1 0-2 8" fill="none" stroke="#3a4656" stroke-width="1.800"/>
					<path d="M16 9h7V2z" fill="#3a4656"/>
				</svg>
				<i class="vb-caret"></i>
				<span class="vb-line"></span>
				<svg width="24" height="24" viewBox="0 0 24 24">
					<rect x=".5" y=".5" width="23" height="23" fill="#7d8ea6" stroke="#3a4656"/>
					<path d="M.5 4h23M12 4v20M3 8h3v3H3zM3 14h3v3H3zM14 8h3v3h-3zM14 14h3v3h-3zM7 9h3M7 15h3M18 9h4M18 15h4" fill="none" stroke="#1e2630"/>
				</svg>
			</div>
		</div>

		<div class="split right"><span></span></div>

		<aside class="panel show">
			<div class="strip">×</div>
			<div class="ptitle">显示设置</div>
			<div class="show-tabs">
				<div class="st">图元显示</div>
				<div class="st on">楼层显示</div>
			</div>
			<div class="radios">
				<label class="radio on"><i></i>当前楼层</label>
				<label class="radio"><i></i>相邻楼层</label>
				<label class="radio"><i></i>全部楼层</label>
			</div>
			<div class="floors">
				<div class="f-root"><i class="tri"></i><div class="f-sel"><span class="box"></span>全部楼层</div></div>
				{#each floors as f}
					<div class="floor"><span class="box">{#if f === '第7层'}<svg width="12" height="12" viewBox="0 0 12 12"><path d="M2 6l3 3 5-6" fill="none" stroke="#aaa" stroke-width="1.500"/></svg>{/if}</span>{f}</div>
				{/each}
			</div>
		</aside>
	</main>

	<svg class="scribble" width="1911" height="809" viewBox="0 0 1911 809">
		<path d={loopPath} fill="none" stroke="#f63336" stroke-width="3" stroke-linejoin="round" stroke-linecap="round"/>
	</svg>
</div>

<style>
	:global(body) {
		margin: 0;
	}

	.app {
		position: relative;
		width: 1911px;
		height: 809px;
		overflow: hidden;
		background: #fff;
		color: #222;
		font: 12px/16px "Noto Sans CJK SC", "Noto Sans", sans-serif;
	}

	i {
		font-style: normal;
	}

	.caret {
		display: inline-block;
		width: 0;
		height: 0;
		margin-left: 5px;
		border: 3px solid transparent;
		border-top: 4px solid #555;
		border-bottom: 0;
		vertical-align: middle;
	}

	/* title + tabs */
	.top {
		display: flex;
		height: 41px;
	}

	.logo-col {
		width: 46px;
		padding: 8px 0 0 9px;
		box-sizing: border-box;
	}

	.top-main {
		flex: 1;
		display: flex;
		flex-direction: column;
	}

	.title-row {
		height: 22px;
		display: flex;
		align-items: center;
	}

	.quick {
		display: flex;
		align-items: center;
		width: 613px;
		padding-left: 5px;
		box-sizing: border-box;
	}

	.q {
		width: 23.4px;
		display: flex;
		justify-content: center;
	}

	.q.u {
		width: 20px;
	}

	.q.s {
		width: 24px;
	}

	.q-caret {
		width: 12px;
		height: 0;
		position: relative;
	}

	.q-caret::after {
		content: '';
		position: absolute;
		left: 3px;
		top: -2px;
		border: 3px solid transparent;
		border-top: 4px solid #555;
		border-bottom: 0;
	}

	.q-caret.cg::after {
		border-top-color: #bbb;
	}

	.q-caret.m::after {
		border-top-color: #666;
		top: -1px;
	}

	.title {
		font-size: 12px;
		letter-spacing: .24px;
		white-space: nowrap;
		color: #222;
	}

	.win {
		margin-left: auto;
		display: flex;
		align-items: center;
		gap: 24px;
		padding-right: 4px;
	}

	.w-min {
		width: 8px;
		height: 2px;
		background: #555;
		margin-top: 6px;
	}

	.tab-row {
		height: 19px;
		display: flex;
		align-items: stretch;
		padding-left: 4px;
		border-bottom: 1px solid #d4d4d4;
		box-sizing: border-box;
	}

	.tab {
		padding: 0 13px;
		line-height: 18px;
		white-space: nowrap;
		color: #333;
	}

	.tab.active {
		background: #5aa9f5;
		color: #fff;
		height: 19px;
	}

	.tab-right {
		margin-left: auto;
		display: flex;
		align-items: center;
		height: 18px;
	}

	.ask {
		width: 244px;
		height: 16px;
		border: 1px solid #c4c4c4;
		box-sizing: border-box;
		display: flex;
		align-items: center;
		justify-content: space-between;
		padding: 0 6px 0 2px;
		color: #c4c4c4;
		background: #fff;
	}

	.avatar {
		margin-left: 10px;
	}

	.user {
		margin-left: 3px;
		color: #111;
	}

	.top-ic {
		display: flex;
		align-items: center;
		gap: 7px;
		margin-left: 11px;
		padding-right: 0;
	}

	.help {
		font: bold 15px/16px "Liberation Sans", sans-serif;
		color: #888;
		width: 19px;
		white-space: nowrap;
	}

	.help .caret {
		margin-left: 1px;
		border-top-color: #bbb;
	}

	/* ribbon */
	.ribbon {
		height: 98px;
		box-sizing: border-box;
		display: flex;
		padding-top: 3px;
		background: linear-gradient(#fff 0, #fff 45%, #e9ecee 100%);
		border-bottom: 1px solid #8b8d90;
	}

	.group {
		height: 91px;
		border-right: 1px solid #d0d2d4;
		box-sizing: border-box;
		padding-top: 1px;
		display: flex;
		flex-direction: column;
	}

	.g1 { width: 146px; }
	.g2 { width: 195px; }
	.g3 { width: 275px; }
	.g4 { width: 237px; }
	.g5 { width: 119px; }
	.g6 { width: 78px; }
	.g7 { width: 201px; }

	.group-body {
		height: 67.5px;
		display: flex;
	}

	.g1 .group-body { padding-left: 8px; }
	.g2 .group-body { padding-left: 9px; }
	.g3 .group-body { padding-left: 8px; }
	.g4 .group-body { padding-left: 9px; }
	.g6 .group-body { padding-left: 8px; }
	.g7 .group-body { padding-left: 10px; }

	.group-name {
		margin-top: 2px;
		height: 20px;
		line-height: 20px;
		text-align: center;
		color: #333;
		white-space: nowrap;
	}

	.group-name .caret {
		margin-left: 6px;
	}

	.col {
		display: flex;
		flex-direction: column;
	}

	.w0 { flex: none; }
	.w53 { width: 53px; }
	.w54 { width: 54px; }
	.w55 { width: 55px; }
	.w66 { width: 66px; }
	.w79 { width: 79px; }
	.w102 { width: 102px; }
	.w112 { width: 112px; }

	.tool {
		height: 22.5px;
		display: flex;
		align-items: center;
		white-space: nowrap;
		color: #222;
	}

	.tool.off {
		color: #b0b0b0;
	}

	.tool .caret {
		border-top-color: #666;
	}

	.ic {
		width: 16px;
		height: 16px;
		margin-right: 3px;
	}

	.ic :global(svg) {
		display: block;
	}

	.big {
		display: flex;
		flex-direction: column;
		align-items: center;
		padding-top: 2px;
		box-sizing: border-box;
		height: 67.5px;
	}

	.big-ic {
		height: 30px;
		margin-bottom: 5px;
	}

	.big-ic svg {
		display: block;
	}

	.big.sel {
		width: 40px;
		margin-right: 7px;
		padding-top: 3px;
		background: #c6d6ea;
	}

	.big.b50 {
		width: 50px;
	}

	.big.b34 {
		width: 36px;
		margin-right: 6px;
	}

	.big.off {
		color: #aaa;
	}

	.selbar {
		height: 27px;
		box-sizing: border-box;
		background: #c8cbcf;
		border-bottom: 1px solid #9b9ea2;
		display: flex;
		gap: 2px;
		padding: 2px 3px;
	}

	.select {
		width: 98px;
		height: 22px;
		background: #fff;
		line-height: 22px;
		padding: 0 4px 0 3px;
		box-sizing: border-box;
		display: flex;
		align-items: center;
		justify-content: space-between;
	}

	/* panels */
	.main {
		height: 644px;
		display: flex;
	}

	.panel {
		display: flex;
		flex-direction: column;
		box-sizing: border-box;
		background: #fff;
		border-left: 1px solid #b9babd;
		border-right: 1px solid #b9babd;
	}

	.strip {
		height: 12px;
		flex: none;
		margin-top: 1px;
		box-sizing: border-box;
		background: #d5d6da;
		border-bottom: 1px solid #bfc0c4;
		text-align: right;
		padding-right: 4px;
		font: bold 11px/11px "Liberation Sans", sans-serif;
		color: #777;
	}

	.ptitle {
		height: 22px;
		flex: none;
		box-sizing: border-box;
		background: #efefef;
		border-bottom: 1px solid #bfc0c4;
		padding-left: 8px;
		line-height: 21px;
		color: #8a8a8a;
	}

	.nav {
		width: 210px;
		flex: none;
	}

	.nav-tools {
		height: 28px;
		flex: none;
		box-sizing: border-box;
		background: #f2f2f2;
		border-bottom: 1px solid #bfc0c4;
		display: flex;
		align-items: center;
		padding: 0 1px 0 7px;
		gap: 4px;
	}

	.sparkle {
		margin-right: auto;
		height: 13px;
	}

	.toggle {
		width: 24px;
		height: 22px;
		box-sizing: border-box;
		border: 1px solid #6aaee8;
		border-radius: 3px;
		background: #fff;
		display: flex;
		align-items: center;
		justify-content: center;
	}

	.tree {
		padding-top: 2px;
	}

	.node {
		height: 24px;
		padding-left: 3px;
		display: flex;
		align-items: center;
	}

	.node.child {
		padding-left: 40px;
	}

	.node-in {
		display: flex;
		align-items: center;
		height: 21px;
		width: 140px;
		white-space: nowrap;
	}

	.node-in.sel {
		background: #c5d7ef;
	}

	.node-ic {
		width: 15px;
		height: 15px;
		margin-right: 5px;
		flex: none;
	}

	.child .node-ic {
		margin: 0 6px 0 4px;
	}

	.node-ic :global(svg) {
		display: block;
	}

	.vip {
		margin-left: 5px;
		width: 30px;
		height: 10px;
		background: #f9d766;
		color: #e5ad2f;
		font: bold 7px/10px "Liberation Serif", serif;
		text-align: center;
	}

	.mid {
		width: 280px;
		flex: none;
		margin-left: 4px;
		display: flex;
		flex-direction: column;
		gap: 4px;
	}

	.comp {
		height: 466px;
		flex: none;
		border-bottom: 1px solid #b9babd;
	}

	.props {
		flex: 1;
		min-height: 0;
	}

	.tabs2 {
		height: 23px;
		flex: none;
		box-sizing: border-box;
		display: flex;
		background: #efefef;
		border-bottom: 1px solid #bfc0c4;
	}

	.t2 {
		width: 65px;
		text-align: center;
		line-height: 22px;
		color: #8a8a8a;
		background: #dcdcdc;
		border-right: 1px solid #c8c8c8;
		box-sizing: border-box;
	}

	.t2.on {
		background: #efefef;
		color: #333;
		font-weight: 500;
	}

	.comp-tools {
		height: 27px;
		flex: none;
		box-sizing: border-box;
		background: #f4f4f4;
		border-bottom: 1px solid #bfc0c4;
		display: flex;
		align-items: center;
		padding-left: 6px;
	}

	.ti {
		display: flex;
		align-items: center;
		gap: 4px;
		color: #333;
		white-space: nowrap;
	}

	.ti .caret {
		margin-left: 3px;
	}

	.t-copy { margin-left: 4px; }
	.t-del { margin-left: 9px; }
	.t-lay { margin-left: 11px; }

	.more {
		margin-left: auto;
		padding-right: 4px;
		font: 8px/10px "DejaVu Sans", sans-serif;
		letter-spacing: -.5px;
		color: #333;
	}

	.comp-search {
		height: 20px;
		flex: none;
		box-sizing: border-box;
		border-bottom: 1px solid #c8c8c8;
		display: flex;
		align-items: center;
		justify-content: space-between;
		padding: 0 6px 0 2px;
		color: #a8a8a8;
	}

	.comp-tree {
		padding: 4px 0 0 10px;
	}

	.tri {
		display: inline-block;
		width: 0;
		height: 0;
		border-style: solid;
		border-width: 0 0 6px 6px;
		border-color: transparent transparent #444 transparent;
		margin-right: 7px;
	}

	.ct-root {
		height: 20px;
		line-height: 20px;
	}

	.ct-leaf {
		margin: 2px 0 0 30px;
	}

	.ct-leaf span {
		display: inline-block;
		background: #b4cfee;
		height: 21px;
		line-height: 21px;
		padding: 0 3px;
	}

	.ptable {
		display: grid;
		grid-template-columns: 22px 101px 113px 41px;
		grid-auto-rows: 21px;
		flex: none;
	}

	.cell {
		box-sizing: border-box;
		border-right: 1px solid #d4d4d4;
		border-bottom: 1px solid #d4d4d4;
		padding-left: 3px;
		line-height: 20px;
		white-space: nowrap;
		display: flex;
		align-items: center;
	}

	.cell.head {
		background: #efefef;
		color: #555;
	}

	.cell.ctr {
		justify-content: center;
		padding-left: 0;
	}

	.cell.num {
		font-size: 13px;
	}

	.cell.link {
		color: #3b6be0;
	}

	.cell.fixed {
		background: #e9e9e9;
		color: #a0a0a0;
	}

	.chk {
		width: 14px;
		height: 14px;
		box-sizing: border-box;
		border: 1px solid #777;
		border-radius: 3px;
	}

	.plus {
		width: 12px;
		height: 12px;
		box-sizing: border-box;
		border: 1px solid #888;
		border-radius: 2px;
		line-height: 9px;
		text-align: center;
		margin: 0 6px 0 0;
		font-family: "Liberation Sans", sans-serif;
		font-size: 11px;
	}

	.gutter {
		width: 22px;
		flex: 1;
		background: #efefef;
	}

	.split {
		width: 4px;
		background: #fff;
		flex: none;
	}

	.split span {
		display: block;
		height: 100px;
		margin-top: 373px;
		background: #6d747c;
	}

	.split.right span {
		background: #7d838a;
	}

	/* drawing */
	.canvas {
		width: 1138px;
		flex: none;
		position: relative;
		background: #000;
		overflow: hidden;
	}

	.draw {
		display: block;
	}

	.big-n {
		font: 18.500px "Open Sans", sans-serif;
		fill: #fff;
		text-anchor: middle;
	}

	.span {
		font: 17.500px "Open Sans", sans-serif;
		fill: #fff;
		text-anchor: middle;
	}

	.tiny {
		font: bold 6px "Liberation Sans", sans-serif;
		fill: #fff;
		text-anchor: middle;
	}

	.yel {
		font: bold 8px "Liberation Sans", sans-serif;
		fill: #f8f800;
	}

	.gre {
		font: bold 5.500px "Liberation Sans", sans-serif;
		fill: #00e000;
	}

	.viewbar {
		position: absolute;
		left: 1105px;
		top: 2px;
		width: 32px;
		height: 225px;
		box-sizing: border-box;
		background: #9a9da2;
		border-radius: 2px;
		display: flex;
		flex-direction: column;
		align-items: center;
		padding-top: 10px;
		gap: 6px;
	}

	.vb-caret {
		width: 0;
		height: 0;
		border: 3px solid transparent;
		border-top: 3px solid #3a4656;
		border-bottom: 0;
	}

	.vb-line {
		width: 24px;
		height: 1px;
		flex: none;
		background: #666;
	}

	.viewbar svg {
		flex: none;
	}

	.show {
		flex: 1;
		min-width: 0;
		border-right: 0;
	}

	.show-tabs {
		height: 28px;
		flex: none;
		box-sizing: border-box;
		background: #efefef;
		border-bottom: 1px solid #bfc0c4;
		display: flex;
		align-items: flex-end;
		padding-left: 2px;
		gap: 3px;
	}

	.st {
		width: 76px;
		height: 22px;
		line-height: 22px;
		background: #dedede;
		border-radius: 3px 3px 0 0;
		text-align: center;
		color: #666;
		box-sizing: border-box;
	}

	.st.on {
		width: 74px;
		background: #fff;
		color: #3c8be0;
		border: 1px solid #c8c8c8;
		border-bottom: 0;
		margin-bottom: -1px;
		height: 25px;
	}

	.radios {
		height: 30px;
		flex: none;
		box-sizing: border-box;
		border-bottom: 1px solid #c8c8c8;
		display: flex;
		align-items: center;
		padding-left: 7px;
	}

	.radio {
		width: 91px;
		display: flex;
		align-items: center;
		gap: 7px;
		color: #222;
	}

	.radio:last-child {
		width: auto;
	}

	.radio i {
		width: 14px;
		height: 14px;
		box-sizing: border-box;
		border: 1px solid #aaa;
		border-radius: 50%;
		background: #fff;
	}

	.radio.on i {
		background: radial-gradient(circle, #3f94f4 0 3.500px, #fff 4px);
	}

	.floors {
		padding-top: 4px;
	}

	.f-root {
		display: flex;
		align-items: center;
		padding-left: 9px;
	}

	.f-root .tri {
		margin-right: 5px;
	}

	.f-sel {
		flex: 1;
		height: 21px;
		background: #c7d9f1;
		display: flex;
		align-items: center;
		padding-left: 4px;
		color: #111;
	}

	.box {
		width: 14px;
		height: 14px;
		flex: none;
		box-sizing: border-box;
		border: 1px solid #aaa;
		border-radius: 2px;
		background: #f0f0f0;
		margin-right: 7px;
		display: flex;
		align-items: center;
		justify-content: center;
	}

	.floor {
		height: 24px;
		display: flex;
		align-items: center;
		padding-left: 45px;
		color: #888;
	}

	.floors .floor:nth-child(2) {
		margin-top: 2px;
	}

	.scribble {
		position: absolute;
		left: 0;
		top: 0;
		pointer-events: none;
	}
</style>
